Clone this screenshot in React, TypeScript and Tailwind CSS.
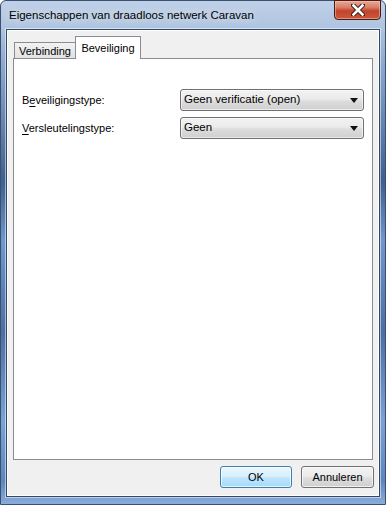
import React from "react";

const font = { fontFamily: '"Liberation Sans", Arial, sans-serif' };

function Arrow() {
  return (
    <svg width="8" height="5" viewBox="0 0 8 5" className="block">
      <polygon points="0,0 8,0 4,5" fill="#111" />
    </svg>
  );
}

function Combo({ value }: { value: string }) {
  return (
    <div className="flex h-[22px] w-[184px] items-center justify-between rounded-[3px] border border-[#707070] bg-[linear-gradient(to_bottom,#f2f2f2_0%,#ebebeb_45%,#dddddd_55%,#cfcfcf_100%)] pl-[3px] pr-[5px] text-[11.5px] text-black shadow-[inset_0_0_0_1px_rgba(255,255,255,0.6)]">
      <span>{value}</span>
      <Arrow />
    </div>
  );
}

export default function App() {
  return (
    <div style={font} className="w-[386px] h-[505px] overflow-hidden bg-white">
      <div className="relative flex h-full w-full flex-col rounded-t-[6px] border border-[#3b5070] bg-[linear-gradient(to_bottom,#bfd1e8_0px,#aec4df_28px,#8eabd2_60px,#3e5f8f_180px,#6f98cc_240px,#4a6fa3_330px,#7aa2d4_420px,#5d86bd_480px,#8cb0dc_505px)]">
        {/* Title bar */}
        <div className="flex h-[28px] items-center pl-[8px] pt-[2px] text-[11.5px] text-black">
          <span className="[text-shadow:0_0_8px_rgba(255,255,255,0.9)]">
            Eigenschappen van draadloos netwerk Caravan
          </span>
        </div>
        {/* Close button */}
        <div className="absolute right-[4px] top-[-1px] flex h-[20px] w-[47px] items-center justify-center rounded-b-[4px] border border-[#4a1a14] bg-[linear-gradient(to_bottom,#e7a797_0%,#d8806a_35%,#c2432b_55%,#c85a3e_100%)] shadow-[inset_0_0_0_1px_rgba(255,200,190,0.5)]">
          <svg width="14" height="12" viewBox="0 0 14 12">
            <path d="M2 1 L12 11 M12 1 L2 11" stroke="#3a1a14" strokeWidth="4.5" strokeLinecap="square" />
            <path d="M2.5 1.5 L11.5 10.5 M11.5 1.5 L2.5 10.5" stroke="#ffffff" strokeWidth="2.6" strokeLinecap="square" />
          </svg>
        </div>
        {/* Client area */}
        <div className="mb-[7px] ml-[5px] mr-[5px] flex flex-1 flex-col border border-[#34496a] bg-[#f0f0f0] shadow-[inset_0_0_0_1px_#ffffff,0_0_0_1px_rgba(255,255,255,0.5)]">
          {/* Tabs */}
          <div className="ml-[7px] mt-[6px] flex items-end text-[11px] text-black">
            <div className="mb-0 flex h-[16px] w-[62px] items-center justify-center border border-b-0 border-[#898c95] bg-[linear-gradient(to_bottom,#f2f2f2,#e2e2e2)] pt-[1px]">
              Verbinding
            </div>
            <div className="relative z-10 -ml-[1px] mb-[-1px] flex h-[23px] w-[66px] items-start justify-center border border-b-0 border-[#898c95] bg-white pt-[3px]">
              Beveiliging
            </div>
          </div>
          {/* Panel */}
          <div className="mx-[6px] h-[402px] border border-[#898c95] bg-white">
            <div className="flex flex-col gap-[6px] pl-[8px] pt-[30px] text-[11px] text-black">
              <div className="flex items-center">
                <div className="w-[158px]">
                  B<span className="underline underline-offset-2">e</span>veiligingstype:
                </div>
                <Combo value="Geen verificatie (open)" />
              </div>
              <div className="flex items-center">
                <div className="w-[158px]">
                  <span className="underline underline-offset-2">V</span>ersleutelingstype:
                </div>
                <Combo value="Geen" />
              </div>
            </div>
          </div>
          {/* Buttons */}
          <div className="mr-[5px] mt-[6px] flex justify-end gap-[9px] text-[11px] text-black">
            <div className="flex h-[22px] w-[72px] items-center justify-center rounded-[3px] border border-[#3c7fb1] bg-[linear-gradient(to_bottom,#eaf6fd_0%,#d9f0fc_45%,#bee6fd_55%,#a7d9f5_100%)] shadow-[inset_0_0_0_1px_rgba(255,255,255,0.7)]">
              OK
            </div>
            <div className="flex h-[22px] w-[73px] items-center justify-center rounded-[3px] border border-[#707070] bg-[linear-gradient(to_bottom,#f2f2f2_0%,#ebebeb_45%,#dddddd_55%,#cfcfcf_100%)] shadow-[inset_0_0_0_1px_rgba(255,255,255,0.7)]">
              Annuleren
            </div>
          </div>
        </div>
      </div>
    </div>
  );
}
